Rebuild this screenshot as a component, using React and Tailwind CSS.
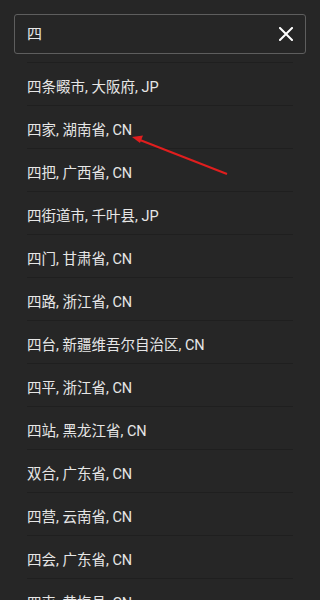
import React from "react";

const places = [
  "四条畷市, 大阪府, JP",
  "四家, 湖南省, CN",
  "四把, 广西省, CN",
  "四街道市, 千叶县, JP",
  "四门, 甘肃省, CN",
  "四路, 浙江省, CN",
  "四台, 新疆维吾尔自治区, CN",
  "四平, 浙江省, CN",
  "四站, 黑龙江省, CN",
  "双合, 广东省, CN",
  "四营, 云南省, CN",
  "四会, 广东省, CN",
  "四屯, 黄梅县, CN",
];

const App = () => {
  return (
    <div
      className="relative w-[320px] h-[600px] overflow-hidden bg-[#262626] text-[#e6e6e6]"
      style={{ fontFamily: "Roboto, 'Noto Sans CJK SC', sans-serif" }}
    >
      {/* Search field */}
      <div className="mx-[14px] mt-[14px] h-[40px] flex items-center justify-between pl-[12px] pr-[12px] border border-[#5e5e5e] rounded-[3px]">
        <span className="text-[15px]">四</span>
        <svg width="14" height="14" viewBox="0 0 14 14" className="text-white">
          <path d="M1 1 L13 13 M13 1 L1 13" stroke="currentColor" strokeWidth="2" strokeLinecap="square" />
        </svg>
      </div>

      {/* Results */}
      <ul className="mt-[8px] mx-[27px] border-t border-[#1f1f1f]">
        {places.map((p) => (
          <li
            key={p}
            className="h-[43px] flex items-center pt-[7px] border-b border-[#1f1f1f] text-[14.5px] whitespace-nowrap"
          >
            {p}
          </li>
        ))}
      </ul>

      {/* Annotation arrow */}
      <svg className="absolute left-0 top-0" width="320" height="600" viewBox="0 0 320 600">
        <line x1="227" y1="174" x2="140" y2="140" stroke="#e01e1e" strokeWidth="2" />
        <polygon points="132,137 143,135.5 140,143" fill="#e01e1e" />
      </svg>
    </div>
  );
};

export default App;
